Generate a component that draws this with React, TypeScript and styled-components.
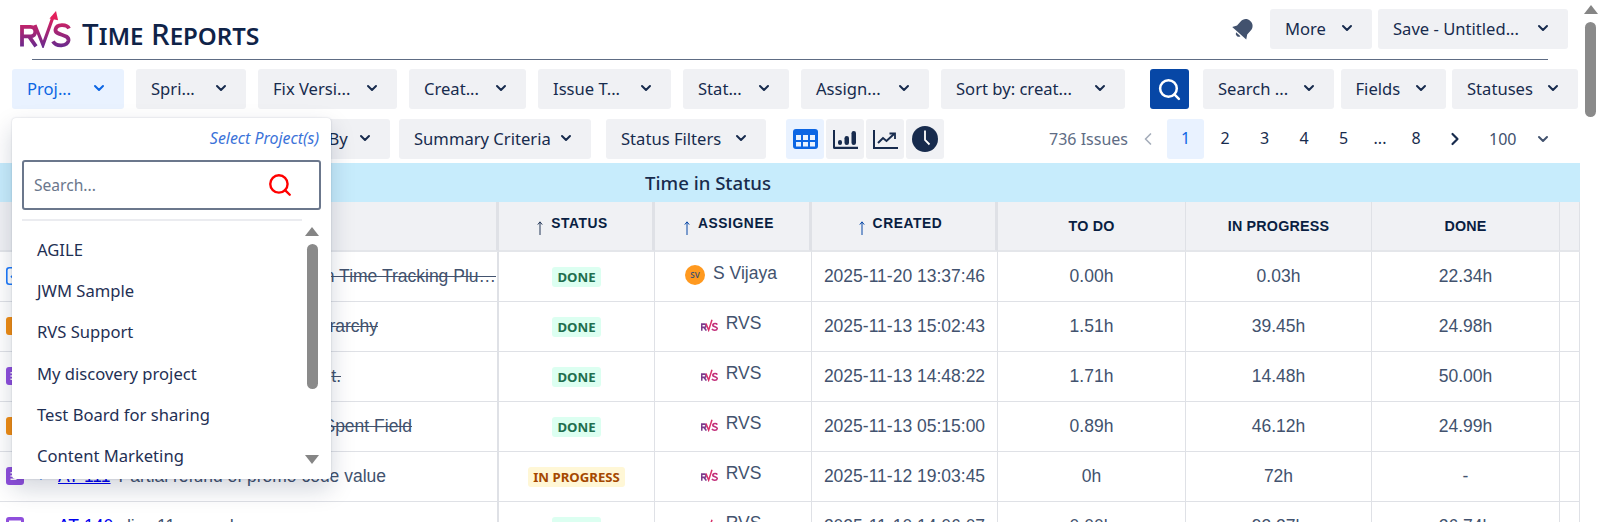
import React from 'react'
import styled, { createGlobalStyle } from 'styled-components'
import { ChevronDown, ChevronLeft, ChevronRight, Search as SearchIcon } from 'lucide-react'

const GlobalStyle = createGlobalStyle`
  html, body { margin: 0; padding: 0; height: 522px; overflow: hidden; background: #fff; }
  body { font-family: "Noto Sans", "Open Sans", sans-serif; color: #172b4d; }
  * { box-sizing: border-box; }
`

const Page = styled.div`
  position: relative;
  width: 1600px;
  height: 522px;
  overflow: hidden;
  display: flex;
`

const Main = styled.div`
  width: 1581px;
  flex: none;
  padding-top: 8px;
`

const Header = styled.header`
  display: flex;
  align-items: flex-start;
  justify-content: space-between;
  height: 51px;
  padding: 1px 13px 0 20px;
`

const Brand = styled.div`
  display: flex;
  align-items: flex-start;
  gap: 11px;
  margin-top: 2px;
`

const Title = styled.h1`
  margin: 6px 0 0;
  font-size: 29.5px;
  font-weight: 500;
  line-height: 34px;
  color: #0f2348;
  font-variant: small-caps;
  font-family: "Noto Sans", sans-serif;
`

const HeaderActions = styled.div`
  display: flex;
  align-items: center;
  gap: 6px;
`

const BellSlot = styled.span`
  display: flex;
  margin-right: 8px;
`

const Rule = styled.div`
  height: 1px;
  margin: 0 33px 0 32px;
  background: #5e6c84;
`

const FilterRow = styled.div`
  display: flex;
  align-items: center;
  padding: 9px 3px 0 12px;
`

const FilterGroup = styled.div`
  display: flex;
  gap: 12px;
`

const SearchGroup = styled.div`
  display: flex;
  gap: 6.5px;
  margin-left: auto;
`

const Btn = styled.button<{ $w: number; $active?: boolean; $ml?: number }>`
  flex: none;
  width: ${(p) => p.$w}px;
  height: 40px;
  margin-left: ${(p) => p.$ml ?? 0}px;
  display: flex;
  align-items: center;
  justify-content: space-between;
  padding: 0 17px 2px 15px;
  border: 0;
  border-radius: 3px;
  background: ${(p) => (p.$active ? '#e9f2ff' : '#f0f1f4')};
  color: ${(p) => (p.$active ? '#0c66e4' : '#172b4d')};
  font: 400 16.6px "Noto Sans", sans-serif;
  white-space: nowrap;
`

const SearchGo = styled.button`
  flex: none;
  width: 39px;
  height: 40px;
  margin-right: 7.5px;
  display: flex;
  align-items: center;
  justify-content: center;
  border: 0;
  border-radius: 3px;
  background: #0747a6;
  color: #fff;
`

const SecondRow = styled.div`
  display: flex;
  align-items: center;
  height: 40px;
  margin-top: 10px;
  padding-left: 260px;
`

const SecondButtons = styled.div`
  display: flex;
  gap: 9px;
  margin-right: 20px;
`

const ViewButtons = styled.div`
  display: flex;
  gap: 2px;
`

const ViewBtn = styled.button<{ $active?: boolean }>`
  width: 38px;
  height: 40px;
  padding: 0;
  border: 0;
  border-radius: 3px;
  display: flex;
  align-items: center;
  justify-content: center;
  background: ${(p) => (p.$active ? '#e9f2ff' : '#f0f1f4')};
`

const Pager = styled.div`
  margin-left: auto;
  display: flex;
  align-items: center;
  height: 40px;
  padding-right: 30px;
  font-size: 16px;
`

const IssueCount = styled.span`
  color: #5e6c84;
  margin-right: 9.5px;
`

const PrevSlot = styled.span`
  display: flex;
  margin-right: 7px;
`

const PageNum = styled.span<{ $active?: boolean; $narrow?: boolean }>`
  width: ${(p) => (p.$narrow ? 36 : 37)}px;
  margin-left: ${(p) => (p.$narrow ? 0 : 2.5)}px;
  height: 40px;
  padding-bottom: 2px;
  display: flex;
  align-items: center;
  justify-content: center;
  border-radius: 3px;
  background: ${(p) => (p.$active ? '#e9f2ff' : 'transparent')};
  color: ${(p) => (p.$active ? '#0c66e4' : '#172b4d')};
`

const NextSlot = styled.span`
  display: flex;
  margin: 0 24px 0 11px;
`

const PageSize = styled.span`
  width: 62px;
  display: flex;
  align-items: center;
  justify-content: space-between;
  color: #42526e;
`

const Table = styled.div`
  display: grid;
  grid-template-columns: 499px 156px 157px 186px 188px 186px 188px 20px;
  width: 1580px;
  margin-top: 4px;
`

const Band = styled.div`
  grid-column: 1 / -1;
  height: 39px;
  background: #c7ecfc;
  display: flex;
  align-items: center;
  justify-content: center;
  padding-right: 164px;
  font-size: 18.6px;
  font-weight: 500;
  color: #172b4d;
`

const HeadCell = styled.div<{ $thick?: boolean }>`
  height: 50px;
  background: #f0f1f4;
  border-right: ${(p) => (p.$thick ? 3 : 1)}px solid #dfe1e6;
  border-bottom: 2px solid #e4e6ea;
  display: flex;
  align-items: center;
  justify-content: center;
  font: 700 14.3px "Liberation Sans", sans-serif;
  color: #091e42;
  letter-spacing: 0.2px;
`

const SortHead = styled(HeadCell)`
  align-items: flex-start;
  padding: 14px 6px 0 0;
  gap: 8px;
  font-size: 13.8px;
  line-height: 16px;
  letter-spacing: 0.6px;
`

const SortArrow = styled.svg`
  flex: none;
  margin-top: 5px;
`

const Cell = styled.div<{ $left?: boolean; $thick?: boolean }>`
  height: 50px;
  border-right: ${(p) => (p.$thick ? 2 : 1)}px solid #dfe1e6;
  border-bottom: 1px solid #dfe1e6;
  display: flex;
  align-items: center;
  justify-content: ${(p) => (p.$left ? 'flex-start' : 'center')};
  font: 400 17.5px "Liberation Sans", sans-serif;
  color: #42526e;
  white-space: nowrap;
  overflow: hidden;
`

const TypeMark = styled.svg`
  flex: none;
  margin: -2px 0 0 6px;
`

const PrioritySlot = styled.span`
  flex: none;
  width: 34px;
  display: flex;
  justify-content: center;
  color: #1d7afc;
`

const SummaryText = styled.span<{ $endGap?: number }>`
  margin-left: ${(p) => (p.$endGap === undefined ? 0 : 'auto')};
  padding-right: ${(p) => p.$endGap ?? 0}px;
`

const Struck = styled.span`
  text-decoration: line-through;
`

const KeyLink = styled.a`
  color: #0000ee;
  text-decoration: underline;
  margin-right: 8px;
`

const Lozenge = styled.span<{ $progress?: boolean }>`
  height: 20px;
  padding: 0 5.5px;
  border-radius: 3px;
  display: flex;
  align-items: center;
  font: 700 13.2px "Noto Sans", sans-serif;
  background: ${(p) => (p.$progress ? '#fff7d6' : '#dcfff1')};
  color: ${(p) => (p.$progress ? '#a54800' : '#216e4e')};
`

const Assignee = styled.div`
  display: flex;
  align-items: center;
  gap: 8px;
  margin-top: -6px;
  padding-right: 4px;
`

const Avatar = styled.span`
  width: 20px;
  height: 20px;
  margin-top: 2px;
  border-radius: 50%;
  background: #ff991f;
  display: flex;
  align-items: center;
  justify-content: center;
  font: 600 8px "Noto Sans", sans-serif;
  color: #42526e;
`

const MiniMark = styled.svg`
  margin-top: 2px;
`

const Dropdown = styled.div`
  position: absolute;
  left: 12px;
  top: 118px;
  width: 319px;
  height: 361px;
  background: #fff;
  border-radius: 4px;
  box-shadow: 0 10px 24px rgba(9, 30, 66, 0.18), 0 0 2px rgba(9, 30, 66, 0.2);
  padding: 10px 10px 0;
`

const DropHint = styled.div`
  text-align: right;
  font-size: 15.9px;
  line-height: 20px;
  font-style: italic;
  color: #3b73d9;
  padding-right: 2px;
`

const SearchBox = styled.div`
  margin-top: 12px;
  height: 50px;
  border: 2px solid #6b778c;
  border-radius: 3px;
  display: flex;
  align-items: center;
  justify-content: space-between;
  padding: 0 26px 0 10px;
  font-size: 15.6px;
  color: #6b778c;
`

const Divider = styled.div`
  width: 280px;
  height: 2px;
  margin-top: 9px;
  background: #ebecf0;
`

const ProjectList = styled.div`
  display: flex;
  margin-top: 5px;
`

const ProjectItems = styled.ul`
  flex: 1;
  list-style: none;
  margin: 0;
  padding: 3px 0 0 15px;
`

const ProjectItem = styled.li`
  height: 41.2px;
  display: flex;
  align-items: center;
  font-size: 16.6px;
  color: #1f3054;
`

const MiniScroll = styled.div`
  width: 14px;
  height: 240px;
  margin-right: 2px;
  display: flex;
  flex-direction: column;
  align-items: center;
`

const ScrollThumb = styled.div<{ $h: number }>`
  width: 11px;
  height: ${(p) => p.$h}px;
  margin-top: 8px;
  flex: none;
  border-radius: 6px;
  background: #8a8a8a;
`

const Tri = styled.div<{ $down?: boolean; $top: number }>`
  flex: none;
  width: 0;
  height: 0;
  margin-top: ${(p) => p.$top}px;
  border-left: 7px solid transparent;
  border-right: 7px solid transparent;
  ${(p) => (p.$down ? 'border-top: 9px solid #858585;' : 'border-bottom: 9px solid #858585;')}
`

const PageScroll = styled.div`
  flex: 1;
  display: flex;
  flex-direction: column;
  align-items: center;
  padding-top: 5px;
`

const Logo = () => (
  <svg width="51" height="37" viewBox="0 0 51 37">
    <defs>
      <linearGradient id="rvs" gradientUnits="userSpaceOnUse" x1="0" y1="5" x2="0" y2="36">
        <stop offset="0" stopColor="#e3205c" />
        <stop offset="1" stopColor="#6a2a8e" />
      </linearGradient>
    </defs>
    <path d="M2 35.5V15.8h8.5c6.4 0 6.4 9.6 0 9.6H3M9 25.4l7 10" fill="none" stroke="url(#rvs)" strokeWidth="3.8" />
    <path d="M15 14l8 20L33 6" fill="none" stroke="url(#rvs)" strokeWidth="3.2" />
    <path d="M36 0l-6.5 7.6 8.6 1.6z" fill="#e3205c" />
    <path d="M49 17.5c-2-4.5-12.5-5-13.5 1-1 6.5 13.8 4 13 11-1 6-12.5 6.5-15.5.8" fill="none" stroke="url(#rvs)" strokeWidth="3.8" />
  </svg>
)

const MiniLogo = () => (
  <MiniMark width="17" height="14" viewBox="0 0 51 37">
    <path d="M2 35.5V15.8h8.5c6.4 0 6.4 9.6 0 9.6H3M9 25.4l7 10" fill="none" stroke="#7a3a8c" strokeWidth="5" />
    <path d="M15 14l8 20L33 3" fill="none" stroke="#d8316a" strokeWidth="4.5" />
    <path d="M49 17.5c-2-4.5-12.5-5-13.5 1-1 6.5 13.8 4 13 11-1 6-12.5 6.5-15.5.8" fill="none" stroke="#c2307a" strokeWidth="5" />
  </MiniMark>
)

const Bell = () => (
  <BellSlot>
    <svg width="26" height="26" viewBox="0 0 24 24" fill="#42526e">
      <g transform="rotate(42 12 12)">
        <path d="M12 2c-3.9 0-6.3 2.8-6.3 6.6v4.6L3.3 17.2h17.4l-2.4-4V8.6C18.3 4.8 15.9 2 12 2z" />
        <path d="M9.3 18.5a2.8 2.8 0 0 0 5.4 0z" />
      </g>
    </svg>
  </BellSlot>
)

const Chev = ({ color = '#172b4d' }: { color?: string }) => (
  <ChevronDown size={16} strokeWidth={3} color={color} />
)

const Arrow = ({ color }: { color: string }) => (
  <SortArrow width="6" height="14" viewBox="0 0 6 14" fill="none" stroke={color} strokeWidth="1">
    <path d="M3 14V1M.8 3.6L3 .8l2.2 2.8" />
  </SortArrow>
)

const GridIcon = () => (
  <svg width="25" height="20" viewBox="0 0 25 20">
    <rect width="25" height="20" rx="3" fill="#0c66e4" />
    <path d="M3 6h5v5H3zM10 6h5v5h-5zM17 6h5v5h-5zM3 13h5v4.5H3zM10 13h5v4.5h-5zM17 13h5v4.5h-5z" fill="#e9f2ff" />
  </svg>
)

const BarsIcon = () => (
  <svg width="25" height="19" viewBox="0 0 25 19" fill="#172b4d">
    <path d="M0 0h2v16.8h23V19H1.5A1.5 1.5 0 0 1 0 17.5z" />
    <rect x="5" y="10" width="4" height="5" rx="2" />
    <rect x="11.5" y="6" width="4.5" height="9" rx="2.2" />
    <rect x="18.5" y="1" width="4.5" height="14" rx="2.2" />
  </svg>
)

const LineIcon = () => (
  <svg width="25" height="19" viewBox="0 0 25 19" fill="none" stroke="#172b4d" strokeWidth="2">
    <path d="M1 0v18h24" />
    <path d="M5 13l5-5 3.5 3L21 4" />
    <path d="M16.5 3.5H22V9" strokeWidth="1.8" />
  </svg>
)

const ClockIcon = () => (
  <svg width="26" height="26" viewBox="0 0 26 26">
    <circle cx="13" cy="13" r="13" fill="#172b4d" />
    <path d="M13 4.5V14l4.5 4.5" fill="none" stroke="#fff" strokeWidth="1.8" />
  </svg>
)

type IssueKind = 'task' | 'bookmark' | 'story' | 'mail'

const TypeIcon = ({ kind }: { kind: IssueKind }) => (
  <TypeMark width="18" height="18" viewBox="0 0 18 18">
    {kind === 'task' && (
      <>
        <rect x="0.8" y="0.8" width="16.4" height="16.4" rx="2.5" fill="#fff" stroke="#1d7afc" strokeWidth="1.6" />
        <path d="M5 9l3 3 5-6" fill="none" stroke="#1d7afc" strokeWidth="1.8" />
      </>
    )}
    {kind === 'bookmark' && (
      <>
        <rect width="18" height="18" rx="3" fill="#f18d13" />
        <path d="M6 4h6v10l-3-2.5L6 14z" fill="#fff" />
      </>
    )}
    {kind === 'story' && (
      <>
        <rect width="18" height="18" rx="3" fill="#8f4fdc" />
        <path d="M4.5 5h7v1.4h-7zM4.5 8.3h9v1.4h-9zM4.5 11.6h6v1.4h-6z" fill="#fff" />
      </>
    )}
    {kind === 'mail' && (
      <>
        <rect width="18" height="18" rx="3" fill="#8f4fdc" />
        <rect x="3" y="3.5" width="12" height="9" fill="#fff" />
      </>
    )}
  </TypeMark>
)

const filters = [
  { label: 'Proj...', w: 112, active: true },
  { label: 'Spri...', w: 110 },
  { label: 'Fix Versi...', w: 139 },
  { label: 'Creat...', w: 117 },
  { label: 'Issue T...', w: 133 },
  { label: 'Stat...', w: 106 },
  { label: 'Assign...', w: 128 },
  { label: 'Sort by: creat...', w: 184 },
]

type Row = {
  kind: IssueKind
  text: string
  keyId?: string
  endGap?: number
  priority?: number
  status: string
  who: string
  created: string
  todo: string
  prog: string
  done: string
}

const rows: Row[] = [
  { kind: 'task', text: 'n Time Tracking Plu…', endGap: 1, status: 'DONE', who: 'S Vijaya', created: '2025-11-20 13:37:46', todo: '0.00h', prog: '0.03h', done: '22.34h' },
  { kind: 'bookmark', text: 'rarchy', endGap: 119, status: 'DONE', who: 'RVS', created: '2025-11-13 15:02:43', todo: '1.51h', prog: '39.45h', done: '24.98h' },
  { kind: 'story', text: 't.', endGap: 156, status: 'DONE', who: 'RVS', created: '2025-11-13 14:48:22', todo: '1.71h', prog: '14.48h', done: '50.00h' },
  { kind: 'bookmark', text: 'Spent Field', endGap: 85, status: 'DONE', who: 'RVS', created: '2025-11-13 05:15:00', todo: '0.89h', prog: '46.12h', done: '24.99h' },
  { kind: 'story', text: 'Partial refund of promo code value', keyId: 'AT-111', priority: 16, status: 'IN PROGRESS', who: 'RVS', created: '2025-11-12 19:03:45', todo: '0h', prog: '72h', done: '-' },
  { kind: 'mail', text: 'disc 11 rewards', keyId: 'AT-140', priority: 26, status: 'DONE', who: 'RVS', created: '2025-11-10 14:06:07', todo: '0.00h', prog: '93.27h', done: '26.74h' },
]

const projects = ['AGILE', 'JWM Sample', 'RVS Support', 'My discovery project', 'Test Board for sharing', 'Content Marketing']

export default function App() {
  return (
    <Page>
      <GlobalStyle />
      <Main>
        <Header>
          <Brand>
            <Logo />
            <Title>Time Reports</Title>
          </Brand>
          <HeaderActions>
            <Bell />
            <Btn $w={102}>More <Chev /></Btn>
            <Btn $w={190}>Save - Untitled... <Chev /></Btn>
          </HeaderActions>
        </Header>
        <Rule />
        <FilterRow>
          <FilterGroup>
            {filters.map((f) => (
              <Btn key={f.label} $w={f.w} $active={f.active}>
                {f.label} <Chev color={f.active ? '#0c66e4' : undefined} />
              </Btn>
            ))}
          </FilterGroup>
          <SearchGroup>
            <SearchGo><SearchIcon size={25} strokeWidth={2.4} /></SearchGo>
            <Btn $w={131}>Search ... <Chev /></Btn>
            <Btn $w={105}>Fields <Chev /></Btn>
            <Btn $w={126}>Statuses <Chev /></Btn>
          </SearchGroup>
        </FilterRow>
        <SecondRow>
          <SecondButtons>
            <Btn $w={130}>Group By <Chev /></Btn>
            <Btn $w={192}>Summary Criteria <Chev /></Btn>
            <Btn $w={160} $ml={6}>Status Filters <Chev /></Btn>
          </SecondButtons>
          <ViewButtons>
            <ViewBtn $active><GridIcon /></ViewBtn>
            <ViewBtn><BarsIcon /></ViewBtn>
            <ViewBtn><LineIcon /></ViewBtn>
            <ViewBtn><ClockIcon /></ViewBtn>
          </ViewButtons>
          <Pager>
            <IssueCount>736 Issues</IssueCount>
            <PrevSlot><ChevronLeft size={20} color="#a5adba" /></PrevSlot>
            <PageNum $active>1</PageNum>
            <PageNum>2</PageNum>
            <PageNum>3</PageNum>
            <PageNum>4</PageNum>
            <PageNum>5</PageNum>
            <PageNum $narrow>...</PageNum>
            <PageNum $narrow>8</PageNum>
            <NextSlot><ChevronRight size={20} strokeWidth={2.6} color="#172b4d" /></NextSlot>
            <PageSize>100 <Chev color="#42526e" /></PageSize>
          </Pager>
        </SecondRow>
        <Table>
          <Band>Time in Status</Band>
          <HeadCell $thick />
          <SortHead $thick><Arrow color="#253858" />STATUS</SortHead>
          <SortHead $thick><Arrow color="#0747a6" />ASSIGNEE</SortHead>
          <SortHead $thick><Arrow color="#0747a6" />CREATED</SortHead>
          <HeadCell>TO DO</HeadCell>
          <HeadCell>IN PROGRESS</HeadCell>
          <HeadCell>DONE</HeadCell>
          <HeadCell />
          {rows.map((r) => (
            <React.Fragment key={r.created}>
              <Cell $left $thick>
                <TypeIcon kind={r.kind} />
                {r.priority && (
                  <PrioritySlot><ChevronDown size={r.priority} strokeWidth={2.4} /></PrioritySlot>
                )}
                <SummaryText $endGap={r.endGap}>
                  {r.keyId && <KeyLink>{r.keyId}</KeyLink>}
                  {r.endGap === undefined ? r.text : <Struck>{r.text}</Struck>}
                </SummaryText>
              </Cell>
              <Cell><Lozenge $progress={r.status !== 'DONE'}>{r.status}</Lozenge></Cell>
              <Cell>
                <Assignee>
                  {r.who === 'RVS' ? <MiniLogo /> : <Avatar>SV</Avatar>}
                  {r.who}
                </Assignee>
              </Cell>
              <Cell>{r.created}</Cell>
              <Cell>{r.todo}</Cell>
              <Cell>{r.prog}</Cell>
              <Cell>{r.done}</Cell>
              <Cell />
            </React.Fragment>
          ))}
        </Table>
      </Main>
      <PageScroll>
        <Tri $top={0} />
        <ScrollThumb $h={95} />
      </PageScroll>
      <Dropdown>
        <DropHint>Select Project(s)</DropHint>
        <SearchBox>
          Search...
          <SearchIcon size={26} strokeWidth={2.2} color="#ff0000" />
        </SearchBox>
        <Divider />
        <ProjectList>
          <ProjectItems>
            {projects.map((name) => (
              <ProjectItem key={name}>{name}</ProjectItem>
            ))}
          </ProjectItems>
          <MiniScroll>
            <Tri $top={0.5} />
            <ScrollThumb $h={145} />
            <Tri $top={66} $down />
          </MiniScroll>
        </ProjectList>
      </Dropdown>
    </Page>
  )
}
